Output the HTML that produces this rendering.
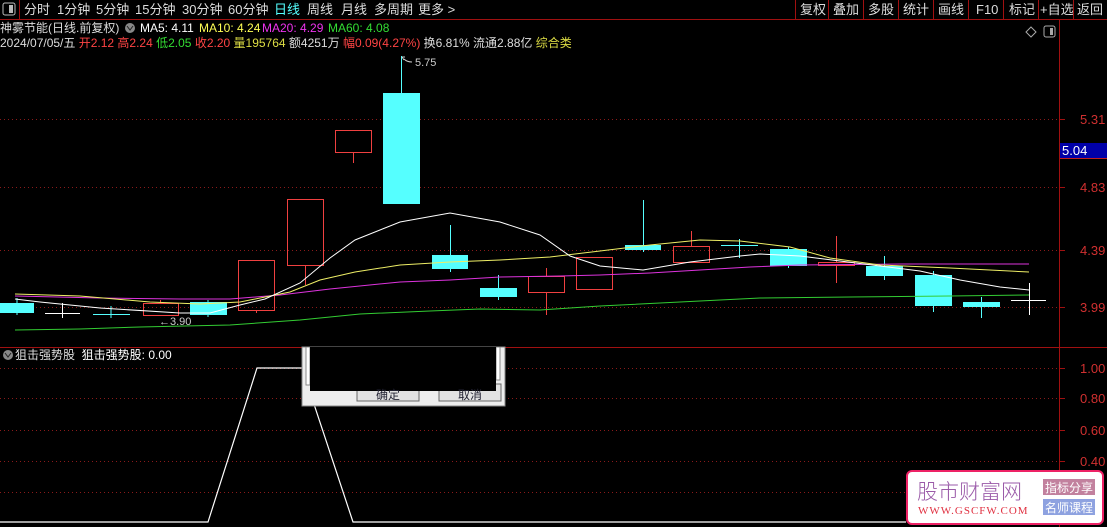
<!DOCTYPE html>
<html><head><meta charset="utf-8">
<style>
html,body{margin:0;padding:0;background:#000;width:1107px;height:527px;overflow:hidden;font-family:"Liberation Sans","Noto Sans CJK SC",sans-serif;}
.t{position:absolute;white-space:nowrap;font-size:12px;line-height:14px;}
</style></head><body>
<div style="position:relative;width:1107px;height:527px;">
<svg width="1107" height="527" style="position:absolute;left:0;top:0" font-family="Liberation Sans, Noto Sans CJK SC, sans-serif">
<line x1="0" y1="19.5" x2="1107" y2="19.5" stroke="#a01010"/>
<line x1="19.5" y1="0" x2="19.5" y2="19" stroke="#a01010"/>
<rect x="3" y="3" width="12" height="12" rx="2" fill="none" stroke="#bbb"/><rect x="9" y="5" width="4" height="8" fill="#bbb"/>
<g stroke="#a01010">
<line x1="795.5" y1="0" x2="795.5" y2="19"/><line x1="828.5" y1="0" x2="828.5" y2="19"/><line x1="863.5" y1="0" x2="863.5" y2="19"/><line x1="898.5" y1="0" x2="898.5" y2="19"/><line x1="933.5" y1="0" x2="933.5" y2="19"/><line x1="968.5" y1="0" x2="968.5" y2="19"/><line x1="1003.5" y1="0" x2="1003.5" y2="19"/><line x1="1038.5" y1="0" x2="1038.5" y2="19"/><line x1="1073.5" y1="0" x2="1073.5" y2="19"/>
</g>
<g font-size="13" fill="#ddd">
<text x="24" y="14">分时</text><text x="57" y="14">1分钟</text><text x="96" y="14">5分钟</text><text x="135" y="14">15分钟</text><text x="182" y="14">30分钟</text><text x="228" y="14">60分钟</text>
<text x="274" y="14" fill="#5ff">日线</text><text x="307" y="14">周线</text><text x="341" y="14">月线</text><text x="374" y="14">多周期</text><text x="418" y="14">更多 &gt;</text>
<text x="800" y="14">复权</text><text x="833" y="14">叠加</text><text x="868" y="14">多股</text><text x="903" y="14">统计</text><text x="938" y="14">画线</text><text x="976" y="14">F10</text><text x="1009" y="14">标记</text><text x="1040" y="14">+自选</text><text x="1077" y="14">返回</text>
</g>
<line x1="1059.5" y1="20" x2="1059.5" y2="527" stroke="#a01010"/>
<line x1="0" y1="347.5" x2="1107" y2="347.5" stroke="#a01010"/>
<g stroke="#8a1a1a" stroke-dasharray="1,3">
<line x1="0" y1="119.5" x2="1059" y2="119.5"/><line x1="0" y1="187.5" x2="1059" y2="187.5"/><line x1="0" y1="250.5" x2="1059" y2="250.5"/><line x1="0" y1="307.5" x2="1059" y2="307.5"/>
<line x1="0" y1="368.5" x2="1059" y2="368.5"/><line x1="0" y1="398.5" x2="1059" y2="398.5"/><line x1="0" y1="430.5" x2="1059" y2="430.5"/><line x1="0" y1="461.5" x2="1059" y2="461.5"/><line x1="0" y1="492.5" x2="1059" y2="492.5"/>
</g>
<g stroke="#a01010"><line x1="1059" y1="119.5" x2="1065" y2="119.5"/><line x1="1059" y1="187.5" x2="1065" y2="187.5"/><line x1="1059" y1="250.5" x2="1065" y2="250.5"/><line x1="1059" y1="307.5" x2="1065" y2="307.5"/><line x1="1059" y1="368.5" x2="1065" y2="368.5"/><line x1="1059" y1="398.5" x2="1065" y2="398.5"/><line x1="1059" y1="430.5" x2="1065" y2="430.5"/><line x1="1059" y1="461.5" x2="1065" y2="461.5"/></g>
<g font-size="13" fill="#d03030">
<text x="1080" y="124">5.31</text><text x="1080" y="192">4.83</text><text x="1080" y="255">4.39</text><text x="1080" y="312">3.99</text>
<text x="1080" y="373">1.00</text><text x="1080" y="403">0.80</text><text x="1080" y="435">0.60</text><text x="1080" y="466">0.40</text>
</g>
<rect x="1060" y="143" width="47" height="15" fill="#0000a8"/><line x1="1060" y1="158.5" x2="1107" y2="158.5" stroke="#c02020"/>
<text x="1062" y="155" font-size="13" fill="#fff">5.04</text>
<path d="M1031 27 L1036 32 L1031 37 L1026 32 Z" fill="none" stroke="#aaa"/>
<rect x="1044" y="26" width="11" height="11" rx="2" fill="none" stroke="#aaa"/><rect x="1050" y="28" width="3" height="7" fill="#aaa"/>
<g stroke="#5ff" fill="#5ff">
<line x1="17" y1="298" x2="17" y2="315"/><rect x="0" y="303" width="34" height="10" stroke="none"/>
<line x1="111" y1="306" x2="111" y2="318"/><line x1="93" y1="314.5" x2="130" y2="314.5"/>
<line x1="208" y1="300" x2="208" y2="317"/><rect x="190" y="302" width="37" height="13" stroke="none"/>
<line x1="401.5" y1="56" x2="401.5" y2="204"/><rect x="383" y="93" width="37" height="111" stroke="none"/>
<line x1="450.5" y1="225" x2="450.5" y2="272"/><rect x="432" y="255" width="36" height="14" stroke="none"/>
<line x1="498.5" y1="275" x2="498.5" y2="300"/><rect x="480" y="288" width="37" height="9" stroke="none"/>
<line x1="643.5" y1="200" x2="643.5" y2="252"/><rect x="625" y="245" width="36" height="5" stroke="none"/>
<line x1="739.5" y1="239" x2="739.5" y2="258"/><line x1="721" y1="245.5" x2="758" y2="245.5"/>
<line x1="788.5" y1="247" x2="788.5" y2="268"/><rect x="770" y="249" width="37" height="17" stroke="none"/>
<line x1="884.5" y1="256" x2="884.5" y2="280"/><rect x="866" y="266" width="37" height="10" stroke="none"/>
<line x1="933.5" y1="271" x2="933.5" y2="312"/><rect x="915" y="275" width="37" height="31" stroke="none"/>
<line x1="981.5" y1="297" x2="981.5" y2="318"/><rect x="963" y="302" width="37" height="5" stroke="none"/>
</g>
<g stroke="#fff"><line x1="62.5" y1="303" x2="62.5" y2="318"/><line x1="45" y1="313.5" x2="80" y2="313.5"/>
<line x1="1029.5" y1="283" x2="1029.5" y2="315"/><line x1="1011" y1="300.5" x2="1046" y2="300.5"/></g>
<g stroke="#f04040" fill="none" shape-rendering="crispEdges">
<line x1="160.5" y1="300" x2="160.5" y2="303"/><rect x="143.5" y="303.5" width="35" height="12"/>
<rect x="238.5" y="260.5" width="36" height="50"/><line x1="256.5" y1="311" x2="256.5" y2="313"/>
<rect x="287.5" y="199.5" width="36" height="66"/><line x1="305.5" y1="266" x2="305.5" y2="285"/>
<rect x="335.5" y="130.5" width="36" height="22"/><line x1="353.5" y1="153" x2="353.5" y2="163"/>
<rect x="528.5" y="276.5" width="36" height="16"/><line x1="546.5" y1="268" x2="546.5" y2="276"/><line x1="546.5" y1="293" x2="546.5" y2="315"/>
<rect x="576.5" y="257.5" width="36" height="32"/>
<rect x="673.5" y="246.5" width="36" height="16"/><line x1="691.5" y1="231" x2="691.5" y2="246"/>
<rect x="818.5" y="262.5" width="36" height="3"/><line x1="836.5" y1="236" x2="836.5" y2="262"/><line x1="836.5" y1="266" x2="836.5" y2="283"/>
</g>
<polyline fill="none" stroke="#3c3" stroke-width="1" points="15,330 80,329 140,327 230,325 300,320 360,314 430,311 480,309 540,310 600,306 680,302 760,298 850,297 950,296 1029,295"/>
<polyline fill="none" stroke="#d3d" stroke-width="1" points="15,296 100,298 180,299 230,299 280,295 330,289 400,282 450,280 500,277 560,276 600,275 650,273 700,270 750,267 800,265 900,264 1029,264"/>
<polyline fill="none" stroke="#ee6" stroke-width="1" points="15,294 80,296 150,302 200,304 240,302 290,292 320,280 355,272 400,265 450,262 500,260 550,257 600,251 650,245 700,240 740,241 790,247 830,258 880,265 950,268 1029,272"/>
<polyline fill="none" stroke="#fff" stroke-width="1" points="15,299 40,302 100,308 180,313 210,313 240,305 265,299 300,283 330,258 355,240 400,222 450,213 500,222 540,235 570,256 600,266 643,270 690,262 740,256 760,254 800,256 840,261 880,266 920,271 960,280 1000,287 1029,290"/>
<text x="159" y="325" font-size="11" fill="#ccc">←3.90</text>
<path d="M402 57 L405 57 M402 57 L404 60 M404 59 Q407 62 412 62" stroke="#ccc" fill="none"/>
<text x="415" y="66" font-size="11" fill="#ccc">5.75</text>
<polyline fill="none" stroke="#fff" stroke-width="1.2" points="0,522 208,522 257,368 302,368"/>
<polyline fill="none" stroke="#fff" stroke-width="1.2" points="306,380 353,522 906,522"/>
<circle cx="8" cy="355" r="5" fill="#888"/><path d="M5 353 L8 357 L11 353" stroke="#222" fill="none"/>
<circle cx="130" cy="28" r="5" fill="#888"/><path d="M127 26 L130 30 L133 26" stroke="#222" fill="none"/>
<rect x="302" y="347" width="203" height="59" fill="#ededed" stroke="#888"/>
<rect x="306" y="347" width="4" height="38" fill="#fff" stroke="#888"/>
<rect x="496" y="347" width="4" height="33" fill="#fff" stroke="#888"/>
<rect x="357" y="388" width="62" height="13" fill="#e2e2e2" stroke="#666"/>
<rect x="439" y="384" width="62" height="17" fill="#e2e2e2" stroke="#666"/>
<rect x="310" y="347" width="186" height="44" fill="#000"/>
<text x="376" y="399" font-size="12" fill="#223">确定</text><text x="458" y="399" font-size="12" fill="#223">取消</text>
<rect x="907" y="471" width="196" height="53" rx="5" fill="#fff" stroke="#ee2266" stroke-width="2"/>
<text x="917" y="499" font-size="21" fill="#9a5aa8" font-family="Noto Sans CJK SC, sans-serif" font-weight="300">股市财富网</text>
<text x="918" y="514" font-size="11" fill="#e03040" font-family="Liberation Serif, serif" letter-spacing="1">WWW.GSCFW.COM</text>
<rect x="1043" y="479" width="52" height="16" fill="#c2819e"/><text x="1045" y="492" font-size="12" fill="#fff">指标分享</text>
<rect x="1043" y="499" width="52" height="16" fill="#8ea2e0"/><text x="1045" y="512" font-size="12" fill="#fff">名师课程</text>
</svg>
<div class="t" style="left:0;top:21px;color:#ddd">神雾节能(日线.前复权)</div>
<div class="t" style="left:140px;top:21px;color:#fff">MA5: 4.11</div>
<div class="t" style="left:199px;top:21px;color:#ff5">MA10: 4.24</div>
<div class="t" style="left:262px;top:21px;color:#e3e">MA20: 4.29</div>
<div class="t" style="left:328px;top:21px;color:#3d3">MA60: 4.08</div>
<div class="t" style="left:0;top:36px;color:#ddd">2024/07/05/五 <span style="color:#f44">开2.12 高2.24</span> <span style="color:#3d3">低2.05</span> <span style="color:#f44">收2.20</span> <span style="color:#dd4">量195764</span> 额4251万 <span style="color:#f44">幅0.09(4.27%)</span> 换6.81% 流通2.88亿 <span style="color:#dd4">综合类</span></div>
<div class="t" style="left:15px;top:348px;color:#ddd">狙击强势股 &nbsp;<span style="color:#fff">狙击强势股: 0.00</span></div>
</div>
</body></html>
